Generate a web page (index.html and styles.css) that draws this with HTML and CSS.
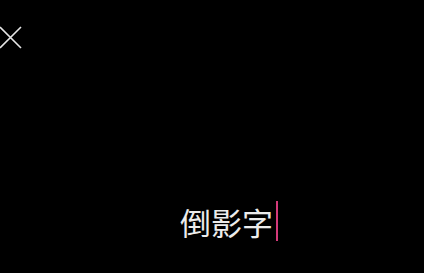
FILE: index.html
```html
<!DOCTYPE html>
<html lang="zh">
<head>
<meta charset="utf-8">
<link rel="stylesheet" href="styles.css">
</head>
<body>
<div class="screen">
  <button class="close" aria-label="关闭">
    <svg width="24" height="24" viewBox="0 0 24 24"><path d="M1 1 L22 22 M22 1 L1 22" stroke="#e6e6e6" stroke-width="1.6" fill="none"/></svg>
  </button>
  <div class="editor">
    <span class="text">倒影字</span><span class="caret"></span>
  </div>
</div>
</body>
</html>
```
FILE: styles.css
```css
html, body {
  margin: 0;
  padding: 0;
  background: #000;
}
.screen {
  width: 424px;
  height: 273px;
  background: #000;
  display: flex;
  flex-direction: column;
}
.close {
  background: none;
  border: 0;
  padding: 0;
  margin: 26px 0 0 -1px;
  width: 24px;
  height: 24px;
  display: block;
}
.close svg { display: block; }
.editor {
  margin-top: 151px;
  padding-left: 180px;
  display: flex;
  align-items: center;
}
.text {
  font-family: "Noto Sans CJK SC", sans-serif;
  font-size: 31px;
  font-weight: 400;
  line-height: 40px;
  color: #ececec;
  position: relative;
  top: 1px;
}
.caret {
  width: 2px;
  height: 40px;
  background: #d43a7a;
  margin-left: 3px;
}
```
